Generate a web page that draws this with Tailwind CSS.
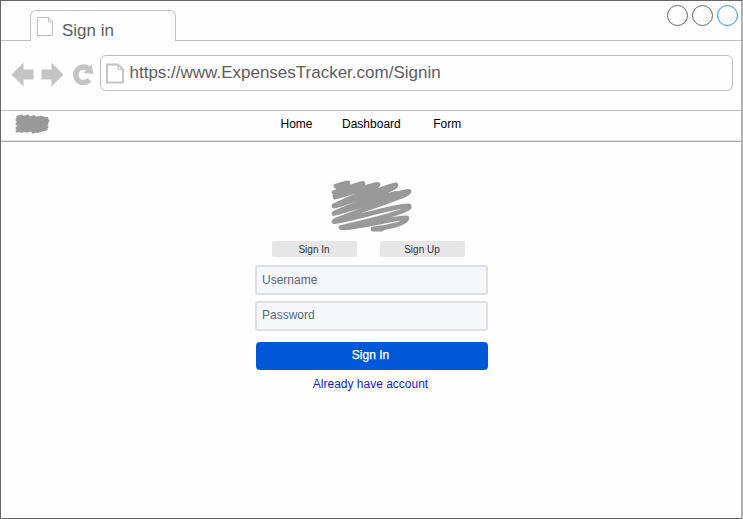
<!DOCTYPE html>
<html lang="en">
<head>
<meta charset="utf-8">
<title>Sign in</title>
<script src="https://cdn.jsdelivr.net/npm/@tailwindcss/browser@4"></script>
</head>
<body class="bg-white font-['Liberation_Sans',Arial,sans-serif]">
<div class="flex h-[519px] w-[743px] flex-col border-y border-l border-r-2 border-y-[#666] border-l-[#666] border-r-[#b0b0b0] bg-[#fefefe]">
  <!-- Tab strip -->
  <div class="flex h-10 shrink-0 items-end">
    <div class="w-[29px] border-b border-[#bfbfbf]"></div>
    <div class="flex h-[31px] w-[146px] items-start rounded-t-md border-x border-t border-[#bfbfbf] pl-[6px] pt-[6px]">
      <svg class="h-[19px] w-[17px]" viewBox="0 0 17 19" fill="none" stroke="#c0c0c0"><path d="M.5.5H11.5L15.5 5V18.5H.5ZM11.5.5V5H15.5"/></svg>
      <span class="ml-2 mt-1 text-[17px] leading-5 text-[#5e5e5e]">Sign in</span>
    </div>
    <div class="flex h-full flex-1 justify-end gap-1 border-b border-[#bfbfbf] pr-[3.5px] pt-1">
      <div class="h-[21px] w-[21px] rounded-full border border-[#666]"></div>
      <div class="h-[21px] w-[21px] rounded-full border border-[#666]"></div>
      <div class="h-[21px] w-[21px] rounded-full border border-[#2f8fdf]"></div>
    </div>
  </div>
  <!-- Address bar -->
  <div class="flex h-[70px] shrink-0 items-start border-b border-[#bfbfbf] pl-[10px] pr-[8px] pt-[14px]">
    <svg class="mt-[6px] h-[26px] w-[89px] shrink-0" viewBox="0 0 89 26" fill="#c4c4c4">
      <path d="M.5 13.500 12.500 1.500V8.500H22.500V18.500H12.500V25.500ZM52.500 13.500 40.500 1.500V8.500H30.500V18.500H40.500V25.500Z"/>
      <path d="M78.500 18.800A7.800 7.800 0 1 1 77.500 7.800" fill="none" stroke="#c4c4c4" stroke-width="5.500"/>
      <path d="M80.500 3.500 82.600 13 72.500 12Z"/>
    </svg>
    <div class="flex h-9 flex-1 items-start rounded-md border border-[#bfbfbf] pl-[5px] pt-[7px]">
      <svg class="h-[21px] w-[18px]" viewBox="0 0 18 21" fill="none" stroke="#c4c4c4" stroke-width="2"><path d="M1 1.500H12L17 6.500V19.500H1Z"/><path d="M12 1.500V6.500H17" stroke-width="1"/></svg>
      <span class="ml-[5.5px] text-[17px] leading-5 text-[#5e5e5e]">https://www.ExpensesTracker.com/Signin</span>
    </div>
  </div>
  <!-- Site navigation -->
  <nav class="flex h-[31px] shrink-0 items-start border-b border-[#a8a8a8] pl-[13px] text-xs leading-[14px] text-black shadow-[inset_0_-1px_0_#e2e2e2]">
    <svg class="mt-[3px] h-5 w-[37px]" viewBox="0 0 37 20" fill="none" stroke="#999" stroke-width="3" stroke-linecap="round" stroke-linejoin="round"><path d="M4 3 8 2 3 6 14 2 3 10 20 2.500 3 14 27 3 3 17 33 4.500 8 17 34 7 13 17 33 10 19 18 33 13 23 17.500 32 15"/><path d="M4 3.500 30 4 32 15 6 17Z" fill="#999"/></svg>
    <a class="ml-[229.5px] mt-[6px]">Home</a>
    <a class="ml-[29.5px] mt-[6px]">Dashboard</a>
    <a class="ml-[32.500px] mt-[6px]">Form</a>
  </nav>
  <!-- Sign-in form -->
  <main class="ml-[254px] flex w-[233px] flex-col pt-[37px]">
    <svg class="ml-[75px] h-[54px] w-[84px]" viewBox="0 0 84 54" fill="none" stroke="#999" stroke-width="4.800" stroke-linecap="round" stroke-linejoin="round">
      <path d="M6 7C12 6 15 4 18 4C18 7 6 13 4 13.500C9 13 29 4.500 33 4.500C35 7 7 17 5 18C14 17 43 5 48 5.500C49 8 6 25 4 27C14 26 58 6 66 6C68 10 7 32 4 34.500C18 32 69 12 79 12.500C80 17 8 38 4 42.500C13 43 66 26 79 27C84 32 25 45 11 48.500C27 50 70 37 77 39C77 45 54 49 43 50L52 50"/>
      <path d="M8 10 25 7 10 16 42 9 26 18 58 10 34 22 66 14M20 30 62 19" stroke-width="4"/>
    </svg>
    <div class="ml-[17px] mt-2 flex gap-[23px] text-[10px] leading-[17px] text-[#333]">
      <div class="h-4 w-[85px] rounded-[2px] bg-[#e6e6e6] pr-px text-center">Sign In</div>
      <div class="h-4 w-[85px] rounded-[2px] bg-[#e6e6e6] pr-px text-center">Sign Up</div>
    </div>
    <div class="mt-[8px] h-[30px] w-full rounded-[3px] border-2 border-[#dddfe3] bg-[#f5f7fa] pl-[5px] text-xs leading-[27px] text-[#596780]">Username</div>
    <div class="mt-[6px] h-[30px] w-full rounded-[3px] border-2 border-[#dddfe3] bg-[#f5f7fa] pl-[5px] text-xs leading-[25px] text-[#596780]">Password</div>
    <div class="ml-[0.5px] mt-[11px] h-[28px] w-[232px] rounded bg-[#0057d8] pr-[2px] text-center text-xs leading-[26px] text-white [-webkit-text-stroke:0.25px_white]">Sign In</div>
    <a class="mr-[2px] mt-[7px] text-center text-xs leading-[14px] text-[#1a1ae0]">Already have account</a>
  </main>
</div>
</body>
</html>
